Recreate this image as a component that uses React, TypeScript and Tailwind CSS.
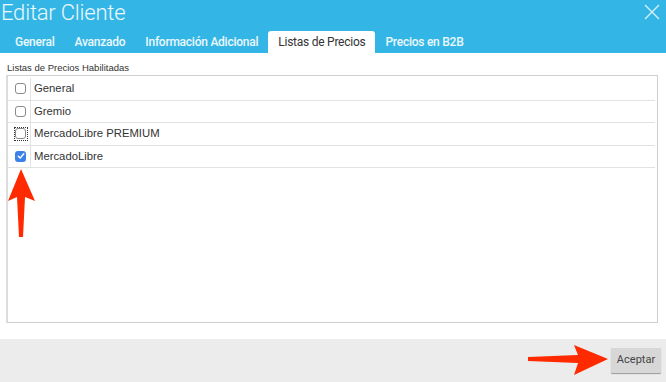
import React from 'react';

const tabs = ['General', 'Avanzado', 'Información Adicional', 'Listas de Precios', 'Precios en B2B'];
const lists = [
  { name: 'General', checked: false },
  { name: 'Gremio', checked: false },
  { name: 'MercadoLibre PREMIUM', checked: false, focus: true },
  { name: 'MercadoLibre', checked: true },
];

const Check: React.FC<{ checked: boolean; focus?: boolean }> = ({ checked, focus }) => (
  <div className={`flex items-center justify-center w-[14px] h-[14px] ${focus ? 'outline outline-1 outline-dotted outline-[#333] -outline-offset-1' : ''}`}>
    {checked ? (
      <div className="w-[11px] h-[11px] rounded-[3px] bg-[#3b82e8] flex items-center justify-center">
        <svg width="8" height="8" viewBox="0 0 8 8">
          <path d="M1.3 4.2 L3.2 6 L6.8 1.8" fill="none" stroke="white" strokeWidth="1.4" strokeLinecap="round" strokeLinejoin="round" />
        </svg>
      </div>
    ) : (
      <div className="w-[11px] h-[11px] rounded-[3px] border border-[#8a8a8a] bg-white" />
    )}
  </div>
);

export default function App() {
  return (
    <div className="relative w-[666px] h-[382px] flex flex-col bg-white overflow-hidden" style={{ fontFamily: 'Roboto, sans-serif' }}>
      {/* Header */}
      <div className="bg-[#33b5e5] h-[53px] flex flex-col">
        <div className="h-[31px] flex items-start justify-between pl-[1px] pr-[5px]">
          <h1 className="text-[22px] leading-[26px] font-light text-white/90 tracking-[-0.2px]">Editar Cliente</h1>
          <svg width="18" height="18" viewBox="0 0 18 18" className="mt-[3px]">
            <path d="M2 2 L16 16 M16 2 L2 16" stroke="white" strokeOpacity="0.8" strokeWidth="1.4" />
          </svg>
        </div>
        <div className="flex h-[22px] pl-[5px] items-end">
          {tabs.map(t => (
            <div
              key={t}
              className={`h-[22px] px-[10px] flex items-center text-[12px] tracking-[-0.25px] ${t === 'Listas de Precios' ? 'bg-white text-[#333] rounded-t-[3px]' : 'text-white/90 font-medium'}`}
            >
              {t}
            </div>
          ))}
        </div>
      </div>

      {/* Body */}
      <div className="flex-1 flex flex-col px-[6px] pt-[9px] pb-[16px]" style={{ fontFamily: '"Liberation Sans", Arial, sans-serif' }}>
        <p className="text-[9.5px] leading-[12px] text-[#333] pl-[1px] mb-[1px]">Listas de Precios Habilitadas</p>
        <div className="flex-1 w-[652px] border border-[#cfcfcf] border-l-[2px] border-l-[#dcdcdc] pt-[2px]">
          {lists.map(l => (
            <div key={l.name} className="flex h-[22.5px] border-b border-[#e2e2e2] mr-[2px]">
              <div className="w-[23px] flex items-center justify-center pl-[3px] border-r border-[#e2e2e2]">
                <Check checked={l.checked} focus={l.focus} />
              </div>
              <span className="pl-[3px] flex items-center text-[11.3px] text-[#333]">{l.name}</span>
            </div>
          ))}
        </div>
      </div>

      {/* Footer */}
      <div className="h-[43px] bg-[#ececec] flex items-center justify-end pr-[5px]">
        <button className="w-[50px] h-[25px] bg-[#d7d7d7] text-[11px] text-[#444] shadow-[0_1px_1px_rgba(0,0,0,0.35)] rounded-[1px]">Aceptar</button>
      </div>

      {/* Red arrows */}
      <svg className="absolute left-[6px] top-[168px]" width="32" height="72" viewBox="0 0 32 72">
        <path d="M15 1 L29 33 L19 29 L17 69 L13 69 L11 29 L2 33 Z" fill="#ff2a00" />
      </svg>
      <svg className="absolute left-[526px] top-[343px]" width="84" height="34" viewBox="0 0 84 34">
        <path d="M82 16 L48 2 L52 12 L2 14 L2 18 L52 20 L48 32 Z" fill="#ff2a00" />
      </svg>
    </div>
  );
}
